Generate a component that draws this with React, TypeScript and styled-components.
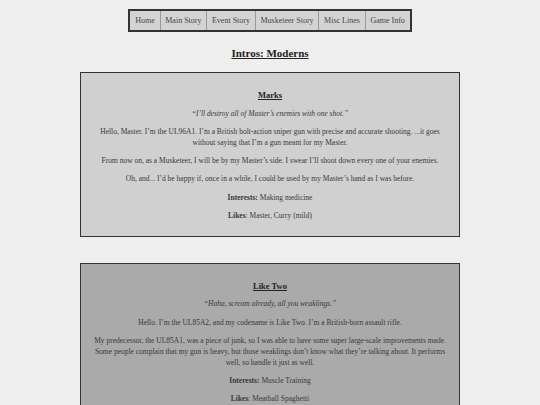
import React from "react";
import styled, { createGlobalStyle } from "styled-components";

const Global = createGlobalStyle`
  html, body {
    margin: 0;
    background: #eeeeee;
  }
  body {
    padding: 8px 0 0;
    font-family: "Liberation Serif", "Times New Roman", serif;
    color: #333;
  }
`;

const Page = styled.div`
  display: flex;
  flex-direction: column;
  align-items: center;
`;

const Nav = styled.nav`
  display: flex;
  border: 2px solid #333;
  background: #d3d3d3;
  margin-top: 1px;
`;

const NavItem = styled.a`
  display: block;
  padding: 0 4.75px;
  height: 19px;
  line-height: 19px;
  font-size: 8px;
  color: #444;
  text-decoration: none;
  & + & {
    border-left: 1px solid #999;
  }
`;

const Title = styled.h1`
  margin: 15px 0 13px;
  font-size: 11px;
  font-weight: bold;
  text-decoration: underline;
  color: #222;
`;

const Card = styled.section<{ $tone: string }>`
  box-sizing: border-box;
  width: 380px;
  border: 1px solid #333;
  background: ${(p) => p.$tone};
  padding: 17px 12px 15px;
  text-align: center;
  margin-bottom: 26px;
`;

const Name = styled.h2`
  margin: 0 0 7.5px;
  font-size: 8.5px;
  font-weight: bold;
  text-decoration: underline;
  color: #222;
`;

const Line = styled.p`
  margin: 7.25px 0 0;
  font-size: 7.5px;
  line-height: 11px;
  color: #383838;
`;

const Quote = styled(Line)`
  font-style: italic;
`;

type Intro = {
  name: string;
  tone: string;
  quote: string;
  lines: string[];
  interests: string;
  likes: string;
};

const intros: Intro[] = [
  {
    name: "Marks",
    tone: "#d0d0d0",
    quote: "\u201cI\u2019ll destroy all of Master\u2019s enemies with one shot.\u201d",
    lines: [
      "Hello, Master. I\u2019m the UL96A1. I\u2019m a British bolt-action sniper gun with precise and accurate shooting. ...it goes without saying that I\u2019m a gun meant for my Master.",
      "From now on, as a Musketeer, I will be by my Master\u2019s side. I swear I\u2019ll shoot down every one of your enemies.",
      "Oh, and... I\u2019d be happy if, once in a while, I could be used by my Master\u2019s hand as I was before.",
    ],
    interests: "Making medicine",
    likes: "Master, Curry (mild)",
  },
  {
    name: "Like Two",
    tone: "#aaaaaa",
    quote: "\u201cHaha, scream already, all you weaklings.\u201d",
    lines: [
      "Hello. I\u2019m the UL85A2, and my codename is Like Two. I\u2019m a British-born assault rifle.",
      "My predecessor, the UL85A1, was a piece of junk, so I was able to have some super large-scale improvements made. Some people complain that my gun is heavy, but those weaklings don\u2019t know what they\u2019re talking about. It performs well, so handle it just as well.",
    ],
    interests: "Muscle Training",
    likes: "Meatball Spaghetti",
  },
];

const navLinks = ["Home", "Main Story", "Event Story", "Musketeer Story", "Misc Lines", "Game Info"];

export default function App() {
  return (
    <Page>
      <Global />
      <Nav>
        {navLinks.map((l) => (
          <NavItem key={l} href="#">
            {l}
          </NavItem>
        ))}
      </Nav>
      <Title>Intros: Moderns</Title>
      {intros.map((it) => (
        <Card key={it.name} $tone={it.tone}>
          <Name>{it.name}</Name>
          <Quote>{it.quote}</Quote>
          {it.lines.map((t, i) => (
            <Line key={i}>{t}</Line>
          ))}
          <Line>
            <b>Interests:</b> {it.interests}
          </Line>
          <Line>
            <b>Likes</b>: {it.likes}
          </Line>
        </Card>
      ))}
    </Page>
  );
}
